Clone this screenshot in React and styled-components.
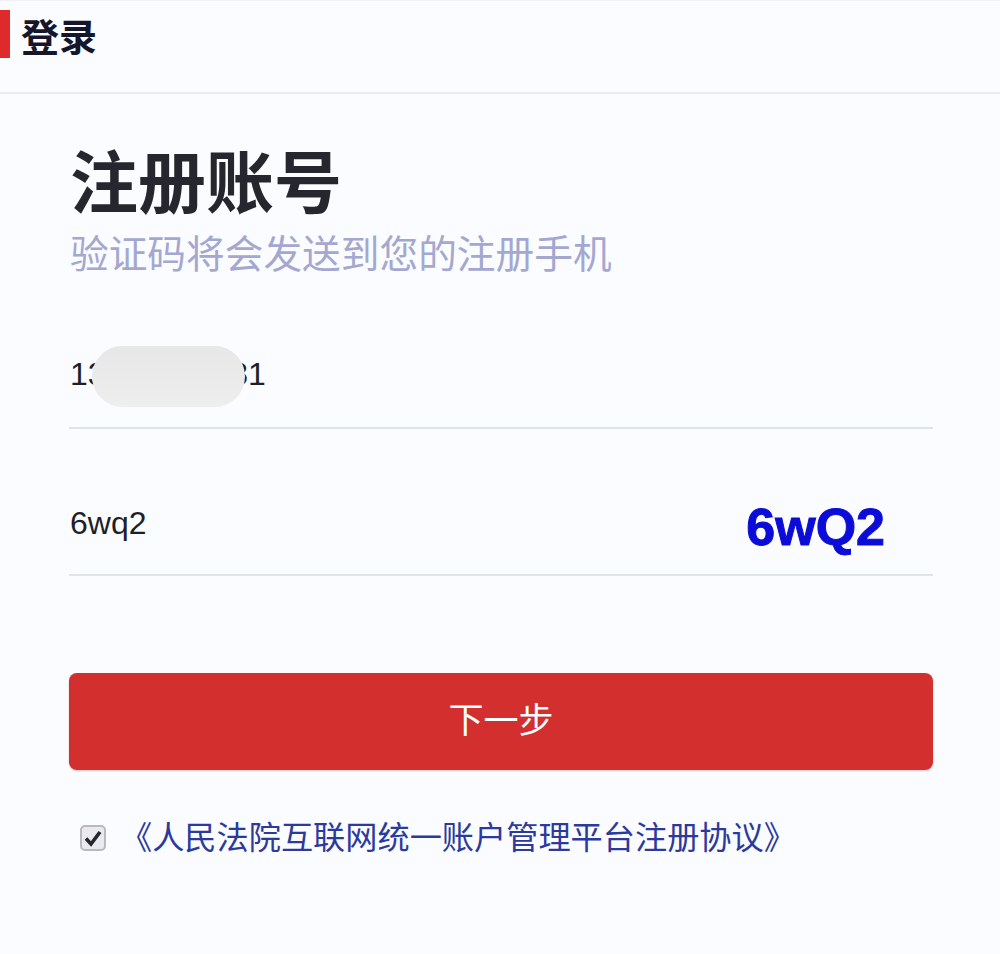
import React from 'react';
import styled, { createGlobalStyle } from 'styled-components';

const GlobalStyle = createGlobalStyle`
	html, body {
		margin: 0;
		padding: 0;
		background: #fbfcff;
	}
	* {
		box-sizing: border-box;
	}
`;

const Page = styled.div`
	width: 1000px;
	height: 954px;
	overflow: hidden;
	background: #fbfcff;
	font-family: "Liberation Sans", "Noto Sans CJK SC", sans-serif;
`;

//Top bar with the red marker
const Header = styled.header`
	display: flex;
	align-items: center;
	gap: 11px;
	height: 94px;
	padding-bottom: 25px;
	border-top: 1px solid #f0f1f5;
	border-bottom: 2px solid #e8ebf2;
`;
const Marker = styled.span`
	width: 10px;
	height: 48px;
	background: #de2a2a;
`;
const HeaderTitle = styled.h1`
	margin: 8px 0 0;
	font-size: 38px;
	line-height: 48px;
	font-weight: 700;
	color: #16162a;
`;

const Main = styled.main`
	display: flex;
	flex-direction: column;
	padding: 50px 67px 0 69px;
`;
const Title = styled.h2`
	margin: 0 0 11px 1px;
	font-size: 68px;
	line-height: 80px;
	font-weight: 700;
	color: #26262e;
`;
const Subtitle = styled.p`
	margin: 0 0 0 1px;
	font-size: 38.7px;
	line-height: 40px;
	color: #a4a8d0;
`;

const FirstField = styled.div`
	position: relative;
	height: 154px;
	padding: 79px 0 0 1px;
	border-bottom: 2px solid #dfe3ee;
	font-size: 32px;
	color: #1f1f28;
`;
const CaptchaField = styled.div`
	display: flex;
	align-items: center;
	justify-content: space-between;
	height: 147px;
	padding: 42px 48px 0 1px;
	border-bottom: 2px solid #dfe3ee;
	font-size: 32px;
	color: #1f1f28;
`;
const Value = styled.span`
	display: block;
	line-height: 40px;
`;
//Smear that hides the phone number in the screenshot
const Smear = styled.span`
	position: absolute;
	left: 23px;
	top: 71px;
	width: 153px;
	height: 61px;
	border-radius: 31px;
	background: linear-gradient(to bottom, #e7e7e8, #eeeeef);
`;
const Captcha = styled.span`
	margin-top: 8px;
	font-size: 52px;
	line-height: 50px;
	font-weight: 700;
	color: #0c0cd8;
	-webkit-text-stroke: 1px #0c0cd8;
`;

const Submit = styled.button`
	display: block;
	width: 100%;
	height: 97px;
	margin-top: 97px;
	padding: 0 0 8px;
	border: none;
	border-radius: 8px;
	background: #d32f2e;
	color: #ffffff;
	font-family: inherit;
	font-size: 35px;
	box-shadow: 0 1px 2px rgba(120, 40, 40, 0.25);
`;

const Agreement = styled.div`
	display: flex;
	align-items: center;
	gap: 14px;
	margin-top: 48px;
	padding-left: 11px;
`;
const CheckBox = styled.span`
	display: flex;
	align-items: center;
	justify-content: center;
	width: 26px;
	height: 26px;
	border: 2px solid #b9b9c0;
	border-radius: 5px;
	background: #e9e9ee;
`;
const AgreementLink = styled.a`
	font-size: 32.2px;
	line-height: 40px;
	color: #2b3a9c;
	text-decoration: none;
	white-space: nowrap;
`;

const App = () => {
	return (
		<Page>
			<GlobalStyle />
			<Header>
				<Marker />
				<HeaderTitle>登录</HeaderTitle>
			</Header>
			<Main>
				<Title>注册账号</Title>
				<Subtitle>验证码将会发送到您的注册手机</Subtitle>
				<FirstField>
					<Value>13000000081</Value>
					<Smear />
				</FirstField>
				<CaptchaField>
					<Value>6wq2</Value>
					<Captcha>6wQ2</Captcha>
				</CaptchaField>
				<Submit>下一步</Submit>
				<Agreement>
					<CheckBox>
						<svg width="20" height="20" viewBox="0 0 20 20">
							<path d="M3 10.5 L8 16 L17 4" fill="none" stroke="#26262e" strokeWidth="3.6" />
						</svg>
					</CheckBox>
					<AgreementLink href="#">《人民法院互联网统一账户管理平台注册协议》</AgreementLink>
				</Agreement>
			</Main>
		</Page>
	);
};

export default App;
